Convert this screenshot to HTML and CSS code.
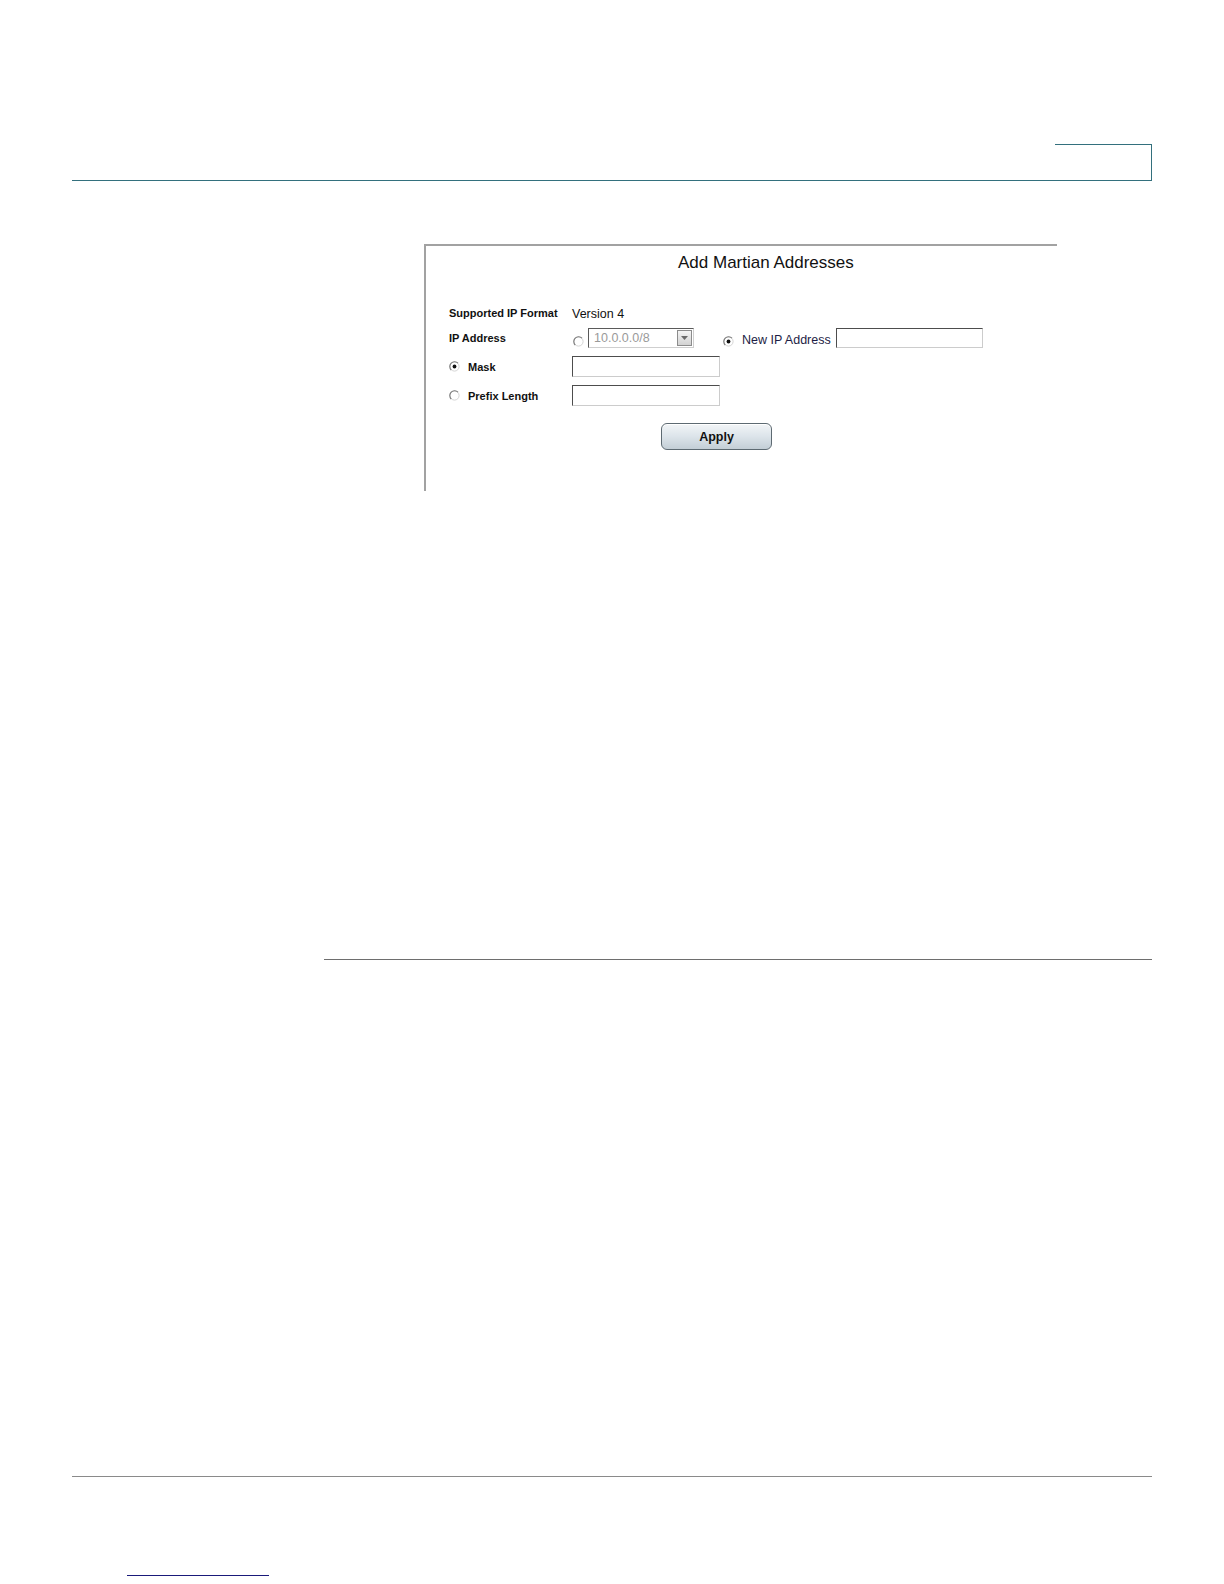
FILE: index.html
```html
<!DOCTYPE html>
<html lang="en">
<head>
<meta charset="utf-8">
<title>Add Martian Addresses</title>
<link rel="stylesheet" href="styles.css">
</head>
<body>
<div class="page">
  <header class="header">
    <div class="tab"></div>
  </header>

  <div class="figure">
    <div class="dialog">
      <h1 class="title">Add Martian Addresses</h1>
      <div class="form">
        <div class="row row1">
          <div class="label">Supported IP Format</div>
          <div class="value">Version 4</div>
        </div>
        <div class="row row2">
          <div class="label label-ip">IP Address</div>
          <svg class="radio radio-low" viewBox="0 0 11 11" width="11" height="11">
            <circle cx="5.5" cy="5.5" r="4.6" fill="#fff" stroke="#d4d4d4" stroke-width="1"/>
            <path d="M9 2.2 A4.6 4.6 0 1 0 2.2 9" fill="none" stroke="#7a7a7a" stroke-width="1.1"/>
          </svg>
          <div class="select">
            <span class="select-text">10.0.0.0/8</span>
            <span class="select-btn">
              <svg viewBox="0 0 7 4" width="7" height="4"><path d="M0 0 H7 L3.5 4 Z" fill="#6a6a6a"/></svg>
            </span>
          </div>
          <svg class="radio radio-low radio-new" viewBox="0 0 11 11" width="11" height="11">
            <circle cx="5.5" cy="5.5" r="4.6" fill="#fff" stroke="#d4d4d4" stroke-width="1"/>
            <path d="M9 2.2 A4.6 4.6 0 1 0 2.2 9" fill="none" stroke="#7a7a7a" stroke-width="1.1"/>
            <circle cx="5.5" cy="5.5" r="1.9" fill="#111"/>
          </svg>
          <span class="new-label">New IP Address</span>
          <span class="input input-new"></span>
        </div>
        <div class="row row3">
          <div class="label label-radio">
            <svg class="radio" viewBox="0 0 11 11" width="11" height="11">
              <circle cx="5.5" cy="5.5" r="4.6" fill="#fff" stroke="#d4d4d4" stroke-width="1"/>
              <path d="M9 2.2 A4.6 4.6 0 1 0 2.2 9" fill="none" stroke="#7a7a7a" stroke-width="1.1"/>
              <circle cx="5.5" cy="5.5" r="1.9" fill="#111"/>
            </svg>
            <span>Mask</span>
          </div>
          <span class="input"></span>
        </div>
        <div class="row row4">
          <div class="label label-radio">
            <svg class="radio" viewBox="0 0 11 11" width="11" height="11">
              <circle cx="5.5" cy="5.5" r="4.6" fill="#fff" stroke="#d4d4d4" stroke-width="1"/>
              <path d="M9 2.2 A4.6 4.6 0 1 0 2.2 9" fill="none" stroke="#7a7a7a" stroke-width="1.1"/>
            </svg>
            <span>Prefix Length</span>
          </div>
          <span class="input"></span>
        </div>
        <div class="actions">
          <button class="apply" type="button">Apply</button>
        </div>
      </div>
    </div>
  </div>

  <div class="section-rule"></div>
  <div class="footer-rule"></div>
  <div class="link-rule"></div>
</div>
</body>
</html>
```

FILE: styles.css
```css
html, body {
  margin: 0;
  padding: 0;
  background: #ffffff;
}

body {
  font-family: "Liberation Sans", Arial, sans-serif;
  color: #000;
}

.page {
  padding-top: 144px;
}

.header {
  margin-left: 72px;
  width: 1080px;
  border-bottom: 1px solid #33707d;
  display: flex;
  justify-content: flex-end;
}

.tab {
  box-sizing: border-box;
  width: 97px;
  height: 36px;
  border-top: 1px solid #33707d;
  border-right: 1px solid #33707d;
}

.figure {
  margin-top: 63px;
  margin-left: 424px;
}

.dialog {
  box-sizing: border-box;
  width: 633px;
  height: 247px;
  border-top: 2px solid #a2a2a2;
  border-left: 2px solid #a2a2a2;
  padding-top: 7px;
}

.title {
  margin: 0 0 31px 252px;
  font-size: 17px;
  font-weight: normal;
  line-height: 20px;
  color: #111;
}

.form {
  padding-left: 23px;
}

.row {
  display: flex;
  align-items: center;
}

.row1 {
  height: 18px;
  margin-bottom: 5px;
}

.row2 {
  height: 21px;
  margin-bottom: 8px;
}

.row3 {
  height: 21px;
  margin-bottom: 8px;
}

.row4 {
  height: 21px;
  margin-bottom: 17px;
}

.label {
  width: 123px;
  flex: none;
  font-size: 11px;
  font-weight: bold;
  color: #111;
  white-space: nowrap;
}

.label-ip {
  width: 124px;
}

.value {
  font-size: 12.5px;
  color: #111;
  margin-top: 1px;
}

.radio {
  display: block;
  flex: none;
}

.radio-low {
  margin-top: 8px;
}

.radio-new {
  margin-left: 29px;
}

.label-radio {
  display: flex;
  align-items: center;
  gap: 8px;
}

.select {
  box-sizing: border-box;
  margin-left: 4px;
  width: 106px;
  height: 20px;
  border-top: 1px solid #5a5a5a;
  border-left: 1px solid #5a5a5a;
  border-right: 1px solid #cfcfcf;
  border-bottom: 1px solid #cfcfcf;
  display: flex;
  align-items: center;
  justify-content: space-between;
  padding: 0 1px 0 5px;
  background: #fff;
}

.select-text {
  font-size: 12.5px;
  color: #9a9a9a;
}

.select-btn {
  box-sizing: border-box;
  width: 15px;
  height: 16px;
  border: 1px solid #8c8c8c;
  background: linear-gradient(#f4f4f4, #d2d2d2);
  display: flex;
  align-items: center;
  justify-content: center;
}

.select-btn svg {
  display: block;
}

.new-label {
  margin-left: 8px;
  margin-top: 5px;
  font-size: 12.5px;
  color: #1d1d45;
  white-space: nowrap;
}

.input {
  display: block;
  box-sizing: border-box;
  width: 148px;
  height: 21px;
  border-top: 1px solid #4d4d4d;
  border-left: 1px solid #4d4d4d;
  border-right: 1px solid #cccccc;
  border-bottom: 1px solid #cccccc;
  background: #fff;
  flex: none;
}

.input-new {
  margin-left: 5px;
  width: 147px;
  height: 20px;
}

.actions {
  padding-left: 212px;
}

.apply {
  box-sizing: border-box;
  width: 111px;
  height: 27px;
  border: 1px solid #5d6a72;
  border-radius: 6px;
  background: linear-gradient(#f2f5f7 0%, #dce4ea 50%, #c3ced6 100%);
  font-family: "Liberation Sans", Arial, sans-serif;
  font-size: 12.5px;
  font-weight: bold;
  color: #111;
  padding: 0;
  box-shadow: inset 0 1px 0 #ffffff;
}

.section-rule {
  margin-top: 468px;
  margin-left: 324px;
  width: 828px;
  border-top: 1px solid #6e6e6e;
}

.footer-rule {
  margin-top: 516px;
  margin-left: 72px;
  width: 1080px;
  border-top: 1px solid #8a8a8a;
}

.link-rule {
  margin-top: 98px;
  margin-left: 127px;
  width: 142px;
  border-top: 1px solid #1a1a7a;
}
```
